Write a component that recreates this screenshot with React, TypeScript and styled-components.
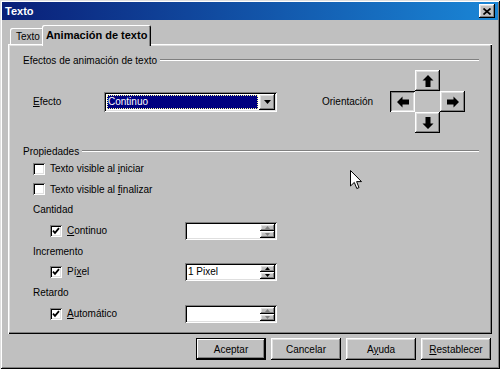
import React from 'react';
import styled, { createGlobalStyle, css } from 'styled-components';

const GlobalStyle = createGlobalStyle`
  html, body {
    margin: 0;
    padding: 0;
    background: #c0c0c0;
  }
  body {
    font-family: 'Liberation Sans', Arial, sans-serif;
    font-size: 10px;
    color: #000;
  }
`;

const raised = css`
  box-shadow: inset -1px -1px #000, inset 1px 1px #fff, inset -2px -2px #808080,
    inset 2px 2px #dfdfdf;
`;

const pressed = css`
  box-shadow: inset 1px 1px #000, inset -1px -1px #fff, inset 2px 2px #808080,
    inset -2px -2px #dfdfdf;
`;

const sunken = css`
  box-shadow: inset 1px 1px #808080, inset -1px -1px #fff, inset 2px 2px #000,
    inset -2px -2px #dfdfdf;
`;

type Dir = 'up' | 'down' | 'left' | 'right';

const rotation: Record<Dir, number> = { up: 0, right: 90, down: 180, left: 270 };

const BlockArrow: React.FC<{ dir: Dir }> = ({ dir }) => (
  <svg width="12" height="12" viewBox="0 0 12 12">
    <g transform={`rotate(${rotation[dir]} 6 6)`}>
      <polygon points="6,0 11.5,5.5 8.5,5.5 8.5,12 3.5,12 3.5,5.5 0.5,5.5" fill="#000" />
    </g>
  </svg>
);

const CheckMark = () => (
  <svg width="8" height="8" viewBox="0 0 8 8">
    <path d="M1 3.6 L3 5.8 L7 1.2" fill="none" stroke="#000" strokeWidth="1.8" />
  </svg>
);

const DownTriangle: React.FC<{ w?: number; h?: number; color?: string }> = ({
  w = 7,
  h = 4,
  color = '#000',
}) => (
  <svg width={w} height={h} viewBox={`0 0 ${w} ${h}`}>
    <polygon points={`0,0 ${w},0 ${w / 2},${h}`} fill={color} />
  </svg>
);

const UpTriangle: React.FC<{ color?: string }> = ({ color = '#000' }) => (
  <svg width="5" height="3" viewBox="0 0 5 3">
    <polygon points="0,3 5,3 2.5,0" fill={color} />
  </svg>
);

const Window = styled.div`
  position: relative;
  width: 500px;
  height: 369px;
  box-sizing: border-box;
  padding: 2px;
  background: #c0c0c0;
  box-shadow: inset 1px 1px #dfdfdf, inset -1px -1px #000, inset 2px 2px #fff,
    inset -2px -2px #808080;
  display: flex;
  flex-direction: column;
  overflow: hidden;
`;

const TitleBar = styled.div`
  height: 18px;
  flex: none;
  display: flex;
  align-items: center;
  justify-content: space-between;
  padding: 0 3px 0 3px;
  background: linear-gradient(to right, #0a1f78, #1a86d6);
  color: #fff;
  font-weight: bold;
  font-size: 11px;
`;

const CloseButton = styled.div`
  width: 16px;
  height: 14px;
  box-sizing: border-box;
  background: #c0c0c0;
  ${raised}
  display: flex;
  align-items: center;
  justify-content: center;
`;

const Body = styled.div`
  flex: 1;
  display: flex;
  flex-direction: column;
  padding: 5px 6px 7px 6px;
`;

const TabStrip = styled.div`
  height: 21px;
  display: flex;
  align-items: flex-end;
  padding-left: 2px;
  margin-bottom: -2px;
  position: relative;
  z-index: 1;
`;

const Tab = styled.div<{ $active?: boolean }>`
  box-sizing: border-box;
  background: #c0c0c0;
  border-radius: 2px 2px 0 0;
  box-shadow: inset 1px 1px #fff, inset -1px 0 #000, inset -2px 0 #808080;
  display: flex;
  align-items: center;
  ${(p) =>
    p.$active
      ? css`
          height: 21px;
          padding: 0 4px 1px 4px;
          margin-left: -2px;
          font-weight: bold;
          font-size: 11px;
          position: relative;
          z-index: 2;
        `
      : css`
          height: 16px;
          padding: 0 4px 0 6px;
          margin-bottom: 2px;
        `}
`;

const Panel = styled.div`
  height: 290px;
  box-sizing: border-box;
  padding: 9px 13px 0 15px;
  box-shadow: inset 1px 1px #fff, inset -1px -1px #000, inset -2px -2px #808080,
    inset 2px 2px #dfdfdf;
  display: flex;
  flex-direction: column;
`;

const GroupHeader = styled.div<{ $mt?: number }>`
  height: 14px;
  margin-top: ${(p) => p.$mt ?? 0}px;
  display: flex;
  align-items: center;
  &::after {
    content: '';
    flex: 1;
    margin-left: 3px;
    height: 0;
    border-top: 1px solid #808080;
    border-bottom: 1px solid #fff;
  }
`;

const EffectRow = styled.div`
  height: 63px;
  margin-top: 3px;
  display: flex;
  align-items: center;
  padding-left: 10px;
`;

const FieldLabel = styled.span<{ $w: number }>`
  width: ${(p) => p.$w}px;
  flex: none;
`;

const Select = styled.div`
  width: 173px;
  height: 20px;
  box-sizing: border-box;
  padding: 2px;
  background: #fff;
  ${sunken}
  display: flex;
`;

const SelectValue = styled.div`
  flex: 1;
  margin: 1px 1px 1px 1px;
  padding-left: 1px;
  background: #000080;
  color: #fff;
  outline: 1px dotted #ffff9c;
  outline-offset: -1px;
  display: flex;
  align-items: center;
`;

const DropButton = styled.div`
  width: 16px;
  box-sizing: border-box;
  background: #c0c0c0;
  ${raised}
  display: flex;
  align-items: center;
  justify-content: center;
`;

const OrientLabel = styled.span`
  width: 68px;
  margin-left: 45px;
  flex: none;
`;

const ArrowPad = styled.div`
  display: grid;
  grid-template-columns: repeat(3, 25px);
  grid-template-rows: repeat(3, 21px);
`;

const ArrowButton = styled.div<{ $pressed?: boolean }>`
  box-sizing: border-box;
  background: #c0c0c0;
  ${(p) => (p.$pressed ? pressed : raised)}
  display: flex;
  align-items: center;
  justify-content: center;
`;

const Row = styled.div<{ $h: number; $indent: number }>`
  height: ${(p) => p.$h}px;
  display: flex;
  align-items: center;
  padding-left: ${(p) => p.$indent}px;
`;

const CheckLabel = styled.label<{ $w?: number }>`
  display: flex;
  align-items: center;
  gap: 5px;
  ${(p) => (p.$w ? `width: ${p.$w}px; flex: none;` : '')}
`;

const Checkbox = styled.span`
  width: 12px;
  height: 12px;
  box-sizing: border-box;
  background: #fff;
  ${sunken}
  display: flex;
  align-items: center;
  justify-content: center;
`;

const SpinField = styled.div`
  width: 92px;
  height: 18px;
  box-sizing: border-box;
  padding: 2px;
  background: #fff;
  ${sunken}
  display: flex;
`;

const SpinText = styled.div`
  flex: 1;
  padding-left: 1px;
  display: flex;
  align-items: center;
`;

const SpinColumn = styled.div`
  width: 15px;
  display: flex;
  flex-direction: column;
`;

const SpinButton = styled.div`
  flex: 1;
  box-sizing: border-box;
  background: #c0c0c0;
  ${raised}
  display: flex;
  align-items: center;
  justify-content: center;
`;

const ButtonRow = styled.div`
  display: flex;
  justify-content: flex-end;
  gap: 5px;
  margin-top: 4px;
  padding-right: 1px;
`;

const PushButton = styled.button<{ $default?: boolean }>`
  width: 70px;
  height: 22px;
  border: 0;
  padding: 0;
  background: #c0c0c0;
  font: inherit;
  color: #000;
  ${(p) =>
    p.$default
      ? css`
          box-shadow: inset 0 0 0 1px #000, inset -2px -2px #000, inset 2px 2px #fff,
            inset -3px -3px #808080;
        `
      : raised}
`;

const U = styled.span`
  text-decoration: underline;
`;

const Cursor = styled.svg`
  position: absolute;
  left: 350px;
  top: 170px;
`;

const Spin: React.FC<{ value?: string; disabled?: boolean }> = ({ value, disabled }) => {
  const c = disabled ? '#808080' : '#000';
  return (
    <SpinField>
      <SpinText>{value}</SpinText>
      <SpinColumn>
        <SpinButton>
          <UpTriangle color={c} />
        </SpinButton>
        <SpinButton>
          <DownTriangle w={5} h={3} color={c} />
        </SpinButton>
      </SpinColumn>
    </SpinField>
  );
};

const SubOption: React.FC<{ label: React.ReactNode; value?: string; disabled?: boolean }> = ({
  label,
  value,
  disabled,
}) => (
  <Row $h={21} $indent={27}>
    <CheckLabel $w={135}>
      <Checkbox>
        <CheckMark />
      </Checkbox>
      {label}
    </CheckLabel>
    <Spin value={value} disabled={disabled} />
  </Row>
);

export default function App() {
  return (
    <>
      <GlobalStyle />
      <Window>
        <TitleBar>
          <span>Texto</span>
          <CloseButton>
            <svg width="8" height="7" viewBox="0 0 8 7">
              <path d="M0.5 0.5 L7.5 6.5 M7.5 0.5 L0.5 6.5" stroke="#000" strokeWidth="1.7" />
            </svg>
          </CloseButton>
        </TitleBar>
        <Body>
          <TabStrip>
            <Tab>Texto</Tab>
            <Tab $active>Animación de texto</Tab>
          </TabStrip>
          <Panel>
            <GroupHeader>Efectos de animación de texto</GroupHeader>
            <EffectRow>
              <FieldLabel $w={71}>
                <U>E</U>fecto
              </FieldLabel>
              <Select>
                <SelectValue>Continuo</SelectValue>
                <DropButton>
                  <DownTriangle />
                </DropButton>
              </Select>
              <OrientLabel>Orientación</OrientLabel>
              <ArrowPad>
                <span />
                <ArrowButton>
                  <BlockArrow dir="up" />
                </ArrowButton>
                <span />
                <ArrowButton $pressed>
                  <BlockArrow dir="left" />
                </ArrowButton>
                <span />
                <ArrowButton>
                  <BlockArrow dir="right" />
                </ArrowButton>
                <span />
                <ArrowButton>
                  <BlockArrow dir="down" />
                </ArrowButton>
                <span />
              </ArrowPad>
            </EffectRow>

            <GroupHeader $mt={11}>Propiedades</GroupHeader>
            <Row $h={21} $indent={10}>
              <CheckLabel>
                <Checkbox />
                <span>
                  Texto visible al <U>i</U>niciar
                </span>
              </CheckLabel>
            </Row>
            <Row $h={20} $indent={10}>
              <CheckLabel>
                <Checkbox />
                <span>
                  Texto visible al <U>f</U>inalizar
                </span>
              </CheckLabel>
            </Row>
            <Row $h={21} $indent={10}>
              Cantidad
            </Row>
            <SubOption
              label={
                <span>
                  <U>C</U>ontinuo
                </span>
              }
              disabled
            />
            <Row $h={21} $indent={10}>
              Incremento
            </Row>
            <Row $h={19} $indent={27}>
              <CheckLabel $w={135}>
                <Checkbox>
                  <CheckMark />
                </Checkbox>
                <span>
                  Pí<U>x</U>el
                </span>
              </CheckLabel>
              <Spin value="1 Pixel" />
            </Row>
            <Row $h={23} $indent={10}>
              Retardo
            </Row>
            <Row $h={19} $indent={27}>
              <CheckLabel $w={135}>
                <Checkbox>
                  <CheckMark />
                </Checkbox>
                <span>
                  <U>A</U>utomático
                </span>
              </CheckLabel>
              <Spin disabled />
            </Row>
          </Panel>
          <ButtonRow>
            <PushButton $default>Aceptar</PushButton>
            <PushButton>Cancelar</PushButton>
            <PushButton>
              A<U>y</U>uda
            </PushButton>
            <PushButton>
              <U>R</U>establecer
            </PushButton>
          </ButtonRow>
        </Body>
        <Cursor width="12" height="20" viewBox="0 0 12 20">
          <polygon
            points="0.5,0.5 0.5,16 4.3,12.4 6.8,18.5 9,17.6 6.6,11.6 11.5,11.6"
            fill="#fff"
            stroke="#000"
            strokeWidth="1"
          />
        </Cursor>
      </Window>
    </>
  );
}
